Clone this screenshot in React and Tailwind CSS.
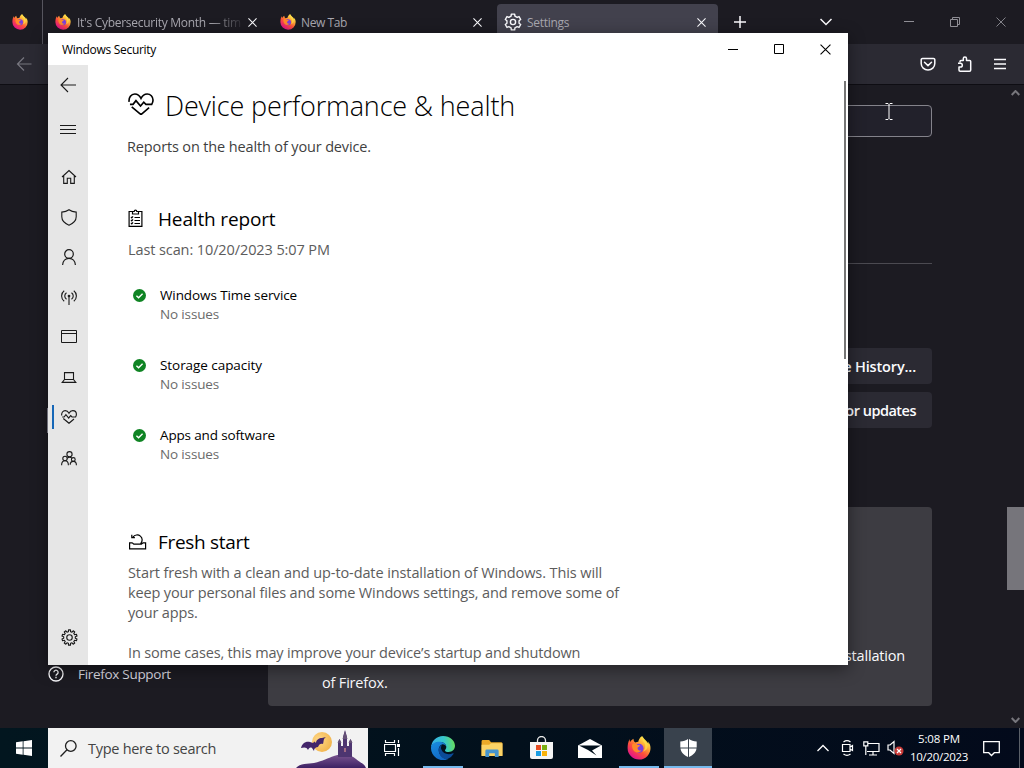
import React from "react";

function Svg({ w = 16, h = w, box, className = "", sw = 1.2, children }) {
  return (
    <svg width={w} height={h} viewBox={box || `0 0 ${w} ${h}`} fill="none" stroke="currentColor" strokeWidth={sw} className={"block shrink-0 " + className}>
      {children}
    </svg>
  );
}

function Firefox({ size = 16, id }) {
  return (
    <svg width={size} height={size} viewBox="0 0 24 24" className="block shrink-0">
      <defs>
        <linearGradient id={id} x1="0.85" y1="0.05" x2="0.2" y2="0.95">
          <stop offset="0.05" stopColor="#fff44f" />
          <stop offset="0.35" stopColor="#ffa436" />
          <stop offset="0.6" stopColor="#ff5139" />
          <stop offset="0.95" stopColor="#e31587" />
        </linearGradient>
      </defs>
      <path d="M23.500 12c0-2.500-1-5-2.800-6.700.5 1 .7 1.700.8 2.400C19.700 4.700 17 3.500 15.600.8 15.300.4 15.200.2 15.200 0c-2.700 1.600-3.700 4.200-3.900 5.700-1 .1-2 .3-2.900.8-1.600-.9-2-2.700-1.900-3.700C5 3.600 3.800 5 3.200 5.900c-.6-.8-.5-2.400-.5-3C1 5.500.6 9.300.6 12.300A11.450 11.450 0 0 0 23.500 12z" fill={`url(#${id})`} />
      <path d="M20.500 8.500c-1-2.600-3.300-4.200-4.900-7.700 0 2.600.2 4 1.500 5.800 2 2.700 1 7.400-1.300 9 3.700-.7 5.500-4.100 4.700-7.100z" fill="#ffe04a" opacity="0.7" />
      <circle cx="12" cy="12.200" r="4.500" fill="#7a3fe0" />
      <path d="M5.200 8.200c1.900-.9 4-.8 5.300.7 1 .2 2.200 0 2.600.3-.4 1.500-2.300 1.600-2.500 2.500-.4 2.200 1.900 3.400 4 2.600-1.600 2.600-5.600 3-7.800.4-1.500-1.800-2-4.300-1.600-6.500z" fill="#ff8a2a" />
    </svg>
  );
}

const Cross = ({ s = 10, sw = 1.2 }) => (
  <Svg w={s} box="0 0 10 10" sw={sw}><path d="M.5.5l9 9M9.500.5l-9 9" /></Svg>
);

const HeartPulse = ({ w = 16, sw = 1.100 }) => (
  <Svg w={w} h={w * 0.875} box="0 0 16 14" sw={sw}>
    <path d="M.7 5.500C.3 2.700 2 .6 4.200.6 6 .6 7.200 1.700 8 3.300 8.800 1.700 10 .6 11.800.6c2 0 3.600 1.600 3.600 3.700 0 1-.3 1.900-.8 2.700H11L9.700 5.700 7.700 8 4.900 4.700 3.100 7H1.200M2.300 8.500L8 13.300 13 9" />
  </Svg>
);

const Gear = ({ w = 18, teeth = 8, sw = 1.1, inner = 2.6, className }) => {
  const pts = [];
  const step = (Math.PI * 2) / teeth;
  for (let i = 0; i < teeth; i++) {
    [[-0.3, 6.200], [-0.2, 8.100], [0.2, 8.100], [0.3, 6.200]].forEach(([a, r]) => {
      const t = i * step + a * step - Math.PI / 2;
      pts.push(`${(9 + Math.cos(t) * r).toFixed(2)},${(9 + Math.sin(t) * r).toFixed(2)}`);
    });
  }
  return (
    <Svg w={w} box="0 0 18 18" sw={sw} className={className}>
      <polygon points={pts.join(" ")} strokeLinejoin="round" />
      <circle cx="9" cy="9" r={inner} />
    </Svg>
  );
};

function Browser() {
  return (
    <div className="flex h-[728px] w-full flex-col bg-[#1c1b22] text-[#fbfbfe]">
      <div className="flex h-11 shrink-0 items-stretch text-[12px] text-[#a9a8b0]">
        <div className="flex w-[43px] items-center border-r border-[#56555e] pl-3"><Firefox id="fx-a" /></div>
        <div className="flex w-[228px] items-center pr-[14px] pl-3">
          <Firefox id="fx-b" />
          <span className="ml-[6px] pt-[2px] whitespace-nowrap tracking-[-0.28px] [mask-image:linear-gradient(to_right,black_135px,transparent_168px)]">It's Cybersecurity Month — tim</span>
          <span className="ml-auto text-[#fbfbfe]"><Cross s={9} /></span>
        </div>
        <div className="flex w-[226px] items-center pr-[15px] pl-[9px]">
          <Firefox id="fx-c" />
          <span className="ml-[5px] pt-[2px] tracking-[-0.4px]">New Tab</span>
          <span className="ml-auto text-[#fbfbfe]"><Cross s={9} /></span>
        </div>
        <div className="mt-1 flex h-9 w-[221px] items-center rounded bg-[#42414d] pr-3 pl-[7px]">
          <Gear w={18} teeth={6} sw={1.400} className="text-[#fbfbfe]" />
          <span className="ml-[5px] pt-[2px] tracking-[-0.3px]">Settings</span>
          <span className="ml-auto text-[#fbfbfe]"><Cross s={9} /></span>
        </div>
        <div className="flex w-[43px] items-center justify-center text-[#fbfbfe]">
          <Svg w={12} sw={1.500}><path d="M6 0v12M0 6h12" /></Svg>
        </div>
        <div className="flex w-[130px] items-center justify-center text-[#fbfbfe]">
          <Svg w={12} h={8} sw={1.500}><path d="M.5 1l5.500 5.500L11.500 1" /></Svg>
        </div>
        <div className="flex w-[36px] items-center justify-center text-[#8f8e95]"><Svg w={10} sw={1}><path d="M0 4.500h10" /></Svg></div>
        <div className="flex w-[56px] items-center justify-center text-[#8f8e95]">
          <Svg w={10} sw={1}><path d="M.5 2.500h7v7h-7zM2.500 2.500v-2h7v7h-2" /></Svg>
        </div>
        <div className="flex flex-1 items-center justify-center pr-[5px] text-[#8f8e95]"><Cross s={10} sw={0.9} /></div>
      </div>
      <div className="flex h-10 shrink-0 items-center bg-[#2b2a33] pr-[18px] pl-4">
        <Svg w={16} className="text-[#77767f]"><path d="M15.500 8H1.500M8 1.500L1.500 8 8 14.500" /></Svg>
        <div className="ml-auto flex items-center gap-[21px]">
          <Svg w={16} sw={1.500}><path d="M2.500 2.500h11a1.300 1.300 0 0 1 1.300 1.300v3.700a6.800 6.500 0 0 1-13.600 0V3.800a1.300 1.300 0 0 1 1.300-1.300zM4.500 6.300l3.500 3.300 3.500-3.300" strokeLinejoin="round" strokeLinecap="round" /></Svg>
          <Svg w={16} sw={1.500}><path d="M3.200 15.200h9.300a1.200 1.200 0 0 0 1.200-1.200V5.500a1 1 0 0 0-1-1H9.500V2.600a1.600 1.600 0 0 0-3.200 0v1.900H4a1 1 0 0 0-1 1v.7M1 7.300h2.400a1.900 1.900 0 0 1 0 3.800H2V14a1.200 1.200 0 0 0 1.200 1.200" strokeLinejoin="round" /></Svg>
          <Svg w={12} h={12} sw={1.500}><path d="M0 1.500h12M0 6h12M0 10.500h12" /></Svg>
        </div>
      </div>
      <div className="flex h-[644px] border-t border-[#0e0d13] text-[15px]">
        <div className="flex w-[268px] flex-col justify-between pb-[42px]">
          <div className="mt-[323px] ml-[47px] h-[25px] border-l border-[#8f8f9d]" />
          <div className="ml-12 flex h-6 items-center gap-[14px]">
            <Svg w={16} sw={1.300}>
              <circle cx="8" cy="8" r="7" />
              <path d="M5.900 6.300a2.100 2.100 0 1 1 3.200 1.800c-.8.5-1.100.8-1.100 1.600M8 10.800v1.400" />
            </Svg>
            <span className="text-[13.500px] tracking-[-0.3px] text-[#dddce3]">Firefox Support</span>
          </div>
        </div>
        <div className="flex w-[664px] flex-col">
          <div className="mt-5 flex h-8 items-start justify-end rounded border border-[#84838b] bg-[#22212b] pr-[38px]">
            <Svg w={8} h={17} sw={1} className="-mt-[3px] text-white"><path d="M.5.5h2.500l1 1 1-1h2.500M4 1.500v14M.5 16.500h2.500l1-1 1 1h2.500" /></Svg>
          </div>
          <div className="mt-[126px] h-px bg-[#4b4a51]" />
          <div className="mt-[84px] flex flex-col items-end gap-2 font-semibold">
            <div className="flex h-9 items-center rounded bg-[#2b2a33] px-4 pt-[2px] whitespace-nowrap text-[14.500px] tracking-[-0.15px]">Show Update History...</div>
            <div className="flex h-9 items-center rounded bg-[#2b2a33] px-4 pt-[2px] whitespace-nowrap text-[14.500px] tracking-[-0.5px]">Check for updates</div>
          </div>
          <div className="mt-[79px] flex h-[199px] flex-col justify-end rounded bg-[#3d3c42] pr-[27px] pb-[10px] text-[14.500px] leading-[27px] tracking-[-0.18px]">
            <span className="self-end whitespace-nowrap">accounts using this installation</span>
            <span className="pl-[54px]">of Firefox.</span>
          </div>
        </div>
        <div className="ml-auto flex w-[17px] flex-col items-center text-[#77767c]">
          <Svg w={9} h={6} sw={2} className="mt-[5px]"><path d="M.7 5l3.800-4 3.800 4" /></Svg>
          <div className="mt-[411px] h-[83px] w-full bg-[#76757b]" />
          <Svg w={9} h={6} sw={2} className="mt-auto mb-[5px]"><path d="M.7 1l3.800 4 3.800-4" /></Svg>
        </div>
      </div>
    </div>
  );
}

const navItem = "flex h-10 w-10 items-center justify-center pl-[2px]";

function SideNav() {
  return (
    <div className="flex w-10 shrink-0 flex-col bg-[#e6e6e6] text-[#1a1a1a]">
      <div className="flex h-10 w-10 items-center justify-center"><Svg w={16} sw={1.100}><path d="M16 8H1M8 1L1 8l7 7" /></Svg></div>
      <div className="mt-1 flex h-10 w-10 items-center justify-center pt-[2px]"><Svg w={16} h={10} sw={1}><path d="M0 .5h16M0 4.500h16M0 8.500h16" /></Svg></div>
      <div className={navItem + " mt-2"}>
        <Svg w={16} sw={1.100}><path d="M1 8l7-6.500L15 8M2.700 6.700v7.700h3.600V9.200h3.400v5.200h3.600V6.700" /></Svg>
      </div>
      <div className={navItem + " pr-px"}>
        <Svg w={16} h={17} sw={1.100}><path d="M8 .8c2 1.500 4.300 2.200 7.200 2.300v4.700c0 3.700-2.700 6.600-7.200 8.400C3.500 14.400.8 11.500.8 7.800V3.100C3.700 3 6 2.300 8 .8z" /></Svg>
      </div>
      <div className={navItem}>
        <Svg w={14} h={16}><circle cx="7" cy="5" r="4.300" /><path d="M.6 16c.2-4 2.800-6.600 6.400-6.600s6.200 2.600 6.400 6.600" /></Svg>
      </div>
      <div className={navItem}>
        <Svg w={16} h={15} sw={1.100}><circle cx="8" cy="6" r=".8" /><path d="M8 6v9M5.500 9.300a4 4 0 0 1 0-6.600M10.500 9.300a4 4 0 0 0 0-6.600M3.200 11.200a6.500 6.500 0 0 1 0-10.400M12.800 11.200a6.500 6.500 0 0 0 0-10.400" /></Svg>
      </div>
      <div className={navItem + " pb-[2px]"}>
        <Svg w={16} h={13} sw={1}><path d="M.5.5h15v12H.5zM.5 3.500h15" /></Svg>
      </div>
      <div className={navItem}>
        <Svg w={16} h={11} sw={1.100}><path d="M3.500 7.500V.6h9v6.900M3.500 7.500h9l2.300 2.900H1.200z" /></Svg>
      </div>
      <div className="flex h-10 w-10 items-center">
        <div className="ml-1 h-6 w-[2px] bg-[#1667b7]" />
        <div className="ml-[7px]"><HeartPulse w={16} sw={1.150} /></div>
      </div>
      <div className={navItem + " pt-[3px]"}>
        <Svg w={16} h={15} sw={1.100}>
          <circle cx="8.500" cy="3.200" r="2.600" /><circle cx="4" cy="7.500" r="2.200" /><circle cx="12.300" cy="8.500" r="1.900" />
          <path d="M.6 14.200c0-2.700 1.400-4.500 3.400-4.500s3.400 1.800 3.400 4.500M9.200 13.800c0-2 1.200-3.400 3.100-3.400s3.100 1.400 3.100 3.800M6.200 7.300c1.200-1.300 3.500-1.300 5 0" />
        </Svg>
      </div>
      <div className={navItem + " mt-auto mb-2"}><Gear w={17} teeth={10} inner={2.900} sw={1.200} /></div>
    </div>
  );
}

function Issue({ title, tracking }) {
  return (
    <div className="flex h-[70px] items-start pl-[45px]">
      <Svg w={13} box="0 0 14 14" sw={1.500} className="mt-[3px] text-white"><circle cx="7" cy="7" r="7" fill="#0f8423" stroke="none" /><path d="M3.700 7.200l2.300 2.200 4.300-4.300" /></Svg>
      <div className="ml-[14px] text-[13.500px] leading-[19px]">
        <div className={"text-black " + tracking}>{title}</div>
        <div className="tracking-[-0.15px] text-[#6b6b6b]">No issues</div>
      </div>
    </div>
  );
}

function SecurityWindow() {
  return (
    <div className="absolute top-[33px] left-12 flex h-[632px] w-[800px] flex-col bg-white text-black shadow-[0_4px_16px_rgba(0,0,0,0.45)]">
      <div className="flex h-8 shrink-0 items-center pl-[14px]">
        <span className="pt-[2px] text-[12px] tracking-[-0.3px]">Windows Security</span>
        <div className="ml-auto flex">
          <div className="flex w-[46px] items-center justify-center"><Svg w={10} sw={1}><path d="M0 5.500h10" /></Svg></div>
          <div className="flex w-[46px] items-center justify-center"><Svg w={10} sw={1}><path d="M.5.5h9v9h-9z" /></Svg></div>
          <div className="flex w-[46px] items-center justify-center"><Cross s={11} sw={1} /></div>
        </div>
      </div>
      <div className="flex h-[600px]">
        <SideNav />
        <div className="flex flex-1 flex-col overflow-hidden pt-[21px]">
          <div className="flex h-10 shrink-0 items-center pl-10">
            <div className="mb-1 w-[37px]"><HeartPulse w={26} sw={1} /></div>
            <h1 className="text-[27px] leading-10 font-light tracking-[-0.150px] text-black">Device performance &amp; health</h1>
          </div>
          <p className="mt-[11px] pl-[39px] text-[14.500px] leading-5 tracking-[-0.14px] text-[#3f3f3f]">Reports on the health of your device.</p>
          <div className="mt-12 flex h-7 shrink-0 items-center pl-10">
            <div className="mb-[2px] w-[30px]">
              <Svg w={15} h={18} sw={1.200}>
                <path d="M4 2.500H1.100v14.800h12.800V2.500H11M4.500 2.500h1.700a1.300 1.300 0 0 1 2.600 0h1.700v2.500h-6zM3 8l.8.900 1.200-1.600M3 11l.8.9 1.200-1.600M3 14l.8.900 1.200-1.600M6.500 8.500H12M6.500 11.500H12M6.500 14.500H12" />
              </Svg>
            </div>
            <h2 className="text-[19px] tracking-[-0.15px]">Health report</h2>
          </div>
          <p className="mt-[7px] pl-10 text-[14.500px] leading-5 tracking-[-0.1px] text-[#5c5c5c]">Last scan: 10/20/2023 5:07 PM</p>
          <div className="mt-[26px]">
            <Issue title="Windows Time service" tracking="tracking-[-0.1px]" />
            <Issue title="Storage capacity" tracking="tracking-[-0.06px]" />
            <Issue title="Apps and software" tracking="tracking-[-0.15px]" />
          </div>
          <div className="mt-8 flex h-7 shrink-0 items-center pl-10">
            <div className="mb-[2px] w-[30px]">
              <Svg w={19} h={17} sw={1.200}>
                <path d="M4.200 9.800H1.600v6h16v-6H15M4.200 9.800l1.600 1.300h7.600L15 9.800M12.600 10.600a5 5 0 1 0-7.600-6.400M3.800 1.800v2.900h3.100" />
              </Svg>
            </div>
            <h2 className="text-[19px] tracking-[-0.3px]">Fresh start</h2>
          </div>
          <div className="mt-[7px] pl-10 text-[14.500px] leading-5 whitespace-nowrap text-[#5c5c5c]">
            <p className="tracking-[-0.1px]">Start fresh with a clean and up-to-date installation of Windows. This will</p>
            <p className="tracking-[-0.14px]">keep your personal files and some Windows settings, and remove some of</p>
            <p className="tracking-[-0.14px]">your apps.</p>
            <p className="mt-5 tracking-[-0.17px]">In some cases, this may improve your device’s startup and shutdown</p>
          </div>
        </div>
        <div className="mt-4 mr-[2px] h-[278px] w-[2px] shrink-0 bg-[#767676]" />
      </div>
    </div>
  );
}

function Halloween() {
  return (
    <svg width="72" height="40" viewBox="0 0 72 40" className="block">
      <defs>
        <radialGradient id="moon" cx="0.35" cy="0.4" r="0.7"><stop offset="0" stopColor="#ffd98a" /><stop offset="1" stopColor="#f2b34a" /></radialGradient>
        <linearGradient id="hill" x1="0" y1="0" x2="0" y2="1"><stop offset="0" stopColor="#7a5490" /><stop offset="1" stopColor="#3d2163" /></linearGradient>
      </defs>
      <circle cx="26" cy="14" r="10" fill="url(#moon)" />
      <path d="M5 20c1-4 4-7 9-6l3 1 1.500-1.500L20 15c0-3 3-5 6-5l4-1c-3 2-2 4-3 7-2-1-4 0-5 3-2 0-4 1-4 4l-2-3c-2-1-3 0-4 2-1-3-4-3-7-2z" fill="#43256a" />
      <path d="M0 40c4-5 12-4 18-5 9-2 14-5 20-7 10-3 18-1 22 3s8 4 10 9z" fill="url(#hill)" />
      <path d="M42 29V14l1.500-3 1.500 3v4h2V9l2-7 2 7v9h2v-4l1.500-3 1.500 3v15z" fill="#4d3570" />
      <path d="M46.500 11L49 3l2.500 8zM41.500 15l2-4 2 4zM52.500 15l2-4 2 4z" fill="#655176" />
      <path d="M48 20h2v4h-2z" fill="#a26b83" />
    </svg>
  );
}

function Edge() {
  return (
    <svg width="24" height="24" viewBox="0 0 24 24" className="block">
      <defs>
        <linearGradient id="e1" x1="0" y1="0.3" x2="1" y2="0.2"><stop offset="0" stopColor="#35aee8" /><stop offset="0.55" stopColor="#37c7ca" /><stop offset="1" stopColor="#6bdf55" /></linearGradient>
        <linearGradient id="e2" x1="0" y1="0" x2="0.5" y2="1"><stop offset="0" stopColor="#198ee0" /><stop offset="1" stopColor="#1268c4" /></linearGradient>
      </defs>
      <path d="M0 12A12 12 0 0 1 12 0c7 0 12 4.600 12 9.800 0 3.800-3 6.200-6.400 6.200-2.700 0-3.600-1-3.600-1.600 0-.8 1.300-1.300 1.300-3.400C15.300 8 12.500 6 9 6 4 6 0 9.200 0 12z" fill="url(#e1)" />
      <path d="M0 12c0-3.500 3.500-6.200 8.300-6.200 4 0 7 2.300 7 5-.4-1.500-1.900-2.500-3.700-2.500C8.800 9 7.700 11.500 7.700 14c0 4.200 3.800 9 9.500 9A12 12 0 0 1 0 12z" fill="url(#e2)" />
      <path d="M7.700 14c0-2.500 1.500-4.600 3.300-5.100-1 1.200-1.300 3-.6 4.700 1.500 3.800 6.500 6.200 11.500 3.700.5-.2.9.2.6.7A12 12 0 0 1 16.500 23.100C11 23.500 7.700 18.500 7.700 14z" fill="#0b4b98" />
    </svg>
  );
}

const slot = "flex h-10 items-center justify-center";
const running = " border-b-2 border-[#76b9ed] pt-[2px]";

function Taskbar() {
  return (
    <div className="flex h-10 w-full bg-linear-to-r from-[#02161f] via-[#02101c] to-[#030a1b] text-white">
      <div className={slot + " w-12"}>
        <svg width="16" height="16" viewBox="0 0 16 16" fill="#fff"><path d="M0 2.200L6.700 1.300V7.600H0zM7.500 1.200L16 0v7.600H7.500zM0 8.400h6.700v6.300L0 13.800zM7.500 8.400H16V16l-8.500-1.200z" /></svg>
      </div>
      <div className="flex w-80 items-center bg-[#f2f2f2] pl-3 text-[#1f1f1f]">
        <Svg w={17} sw={1.300}><circle cx="10.800" cy="6" r="5.300" /><path d="M7 9.800L.5 16.500" /></Svg>
        <span className="ml-[11px] pt-[2px] text-[14.500px] tracking-[-0.28px] text-[#444]">Type here to search</span>
        <div className="ml-auto"><Halloween /></div>
      </div>
      <div className={slot + " w-12"}>
        <Svg w={16} sw={1.200}><path d="M1.500 0v2.500h9V0M1.500 16v-2.500h9V16M.5 4.500h11v7H.5zM14.500 0v3M14.500 8v8" /><path d="M13 4h3v3h-3z" fill="currentColor" stroke="none" /></Svg>
      </div>
      <div className="ml-[7px] flex gap-[9px]">
        <div className={slot + " w-10" + running}><Edge /></div>
        <div className={slot + " w-10"}>
          <svg width="22" height="19" viewBox="0 0 22 20" className="block">
            <path d="M0 2.500A1.500 1.500 0 0 1 1.500 1H8l2 2.500h10.500A1.500 1.500 0 0 1 22 5v12.500H0z" fill="#eba929" />
            <path d="M0 6h8l2-1.500h12V18H0z" fill="#fbd366" />
            <path d="M4 19v-6.500a1.500 1.500 0 0 1 1.500-1.500h11a1.500 1.500 0 0 1 1.500 1.500V19h-4v-4H8v4z" fill="#4594cf" />
          </svg>
        </div>
        <div className={slot + " w-10"}>
          <svg width="23" height="24" viewBox="0 0 23 24" className="block">
            <path d="M7.500 6V4.500a4 4 0 0 1 8 0V6" stroke="#e8e8e8" strokeWidth="1.300" fill="none" />
            <path d="M0 6h23v15a2 2 0 0 1-2 2H2a2 2 0 0 1-2-2z" fill="#f5f5f5" />
            <path d="M6 9h5v5H6z" fill="#e64d23" /><path d="M12 9h5v5h-5z" fill="#7aae12" /><path d="M6 15h5v5H6z" fill="#1b9de2" /><path d="M12 15h5v5h-5z" fill="#f8b209" />
          </svg>
        </div>
        <div className={slot + " w-10"}>
          <svg width="24" height="19" viewBox="0 0 24 19" className="block">
            <path d="M0 6.500L12 0l12 6.500V19H0z" fill="#fff" /><path d="M1 6.500h22l-9 5 4.500 5L10 11z" fill="#02101c" />
          </svg>
        </div>
        <div className={slot + " w-10" + running}><Firefox size={24} id="fx-t" /></div>
      </div>
      <div className={slot + " ml-[5px] w-12 bg-[#39424d]" + running}>
        <svg width="17" height="18" viewBox="0 0 17 18"><path d="M8 0v8.500H.3V2.500C3.300 2.500 6 1.600 8 0zM9 0c2 1.600 4.700 2.500 7.700 2.500v6H9zM.5 9.500H8V18C4 16.300 1 13.500.5 9.500zM9 9.500h7.500C16 13.500 13 16.300 9 18z" fill="#fff" /></svg>
      </div>
      <div className="ml-auto flex items-center">
        <Svg w={12} h={8} sw={1.300}><path d="M.5 7L6 1.500 11.500 7" /></Svg>
        <Svg w={14} h={16} sw={1.200} className="ml-[12px]"><path d="M1.500 4.500h7.500v7H1.500zM9 7l2.500-1.500v5L9 9M2.500 2C4.500.5 7.500.5 9.500 2M2.500 14c2 1.500 5 1.500 7 0" /></Svg>
        <Svg w={17} h={15} sw={1.200} className="ml-[8px]"><path d="M5 2.500h11v8H4M.8.8h4v4h-4zM2.800 5v9M10 10.500V14M6 14h8" /></Svg>
        <Svg w={17} h={16} sw={1.200} className="ml-[7px]"><path d="M1 5h2l4-3.500v12L3 10H1z" /><circle cx="12" cy="11" r="4.500" fill="#c83a37" stroke="none" /><path d="M10 9l4 4M14 9l-4 4" /></Svg>
        <div className="ml-[5px] flex w-[60px] flex-col items-center text-[11.500px] leading-[18px] whitespace-nowrap">
          <span className="tracking-[-0.15px]">5:08 PM</span>
          <span className="tracking-[-0.32px]">10/20/2023</span>
        </div>
        <Svg w={17} h={17} sw={1.300} className="ml-[14px]"><path d="M.7 1.700h15.600v11h-5L8.500 15.500l-2.800-2.800h-5z" /></Svg>
        <div className="ml-[19px] h-10 w-[5px] border-l border-[#5b6068]" />
      </div>
    </div>
  );
}

export default function App() {
  return (
    <div className="relative flex h-[768px] w-[1024px] flex-col overflow-hidden font-['Open_Sans','Noto_Sans',sans-serif]">
      <Browser />
      <Taskbar />
      <SecurityWindow />
    </div>
  );
}
